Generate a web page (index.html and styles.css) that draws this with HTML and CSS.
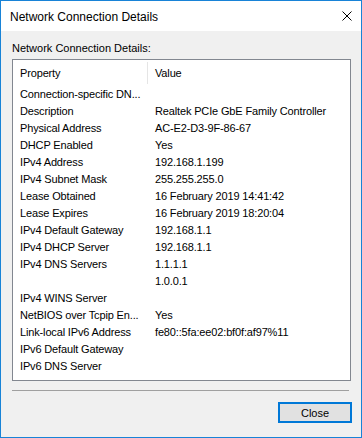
FILE: index.html
```html
<!DOCTYPE html>
<html lang="en">
  <head>
    <meta charset="UTF-8" />
    <meta name="viewport" content="width=device-width, initial-scale=1.0" />
    <title>Network Connection Details</title>
    <link rel="stylesheet" href="styles.css">
  </head>
  <body>
    <div class="window">
      <header class="title-bar">
        <span class="title">Network Connection Details</span>
        <button class="close-x" aria-label="Close">
          <svg width="10" height="10" viewBox="0 0 10 10">
            <path d="M0.5 0.5 L9.5 9.5 M9.5 0.5 L0.5 9.5" stroke="#000" stroke-width="1" fill="none" />
          </svg>
        </button>
      </header>

      <main class="content">
        <p class="caption">Network Connection Details:</p>

        <div class="list-view">
          <div class="list-header">
            <div class="col-prop">Property</div>
            <div class="col-val">Value</div>
          </div>
          <div class="list-body">
            <div class="row"><span>Connection-specific DN...</span><span></span></div>
            <div class="row"><span>Description</span><span>Realtek PCIe GbE Family Controller</span></div>
            <div class="row"><span>Physical Address</span><span>AC-E2-D3-9F-86-67</span></div>
            <div class="row"><span>DHCP Enabled</span><span>Yes</span></div>
            <div class="row"><span>IPv4 Address</span><span>192.168.1.199</span></div>
            <div class="row"><span>IPv4 Subnet Mask</span><span>255.255.255.0</span></div>
            <div class="row"><span>Lease Obtained</span><span>16 February 2019 14:41:42</span></div>
            <div class="row"><span>Lease Expires</span><span>16 February 2019 18:20:04</span></div>
            <div class="row"><span>IPv4 Default Gateway</span><span>192.168.1.1</span></div>
            <div class="row"><span>IPv4 DHCP Server</span><span>192.168.1.1</span></div>
            <div class="row"><span>IPv4 DNS Servers</span><span>1.1.1.1</span></div>
            <div class="row"><span></span><span>1.0.0.1</span></div>
            <div class="row"><span>IPv4 WINS Server</span><span></span></div>
            <div class="row"><span>NetBIOS over Tcpip En...</span><span>Yes</span></div>
            <div class="row"><span>Link-local IPv6 Address</span><span>fe80::5fa:ee02:bf0f:af97%11</span></div>
            <div class="row"><span>IPv6 Default Gateway</span><span></span></div>
            <div class="row"><span>IPv6 DNS Server</span><span></span></div>
          </div>
        </div>

        <hr class="separator" />

        <div class="actions">
          <button class="btn-close">Close</button>
        </div>
      </main>
    </div>
  </body>
</html>
```

FILE: styles.css
```css
/* Windows 10 style details dialog */

* {
  box-sizing: border-box;
}

body {
  margin: 0;
  padding: 0;
  font-family: "Liberation Sans", Arial, sans-serif;
  color: #000;
}

.window {
  width: 362px;
  height: 438px;
  border: 1px solid #1883d7;
  background-color: #f0f0f0;
  display: flex;
  flex-direction: column;
}

.title-bar {
  height: 30px;
  background-color: #fff;
  display: flex;
  align-items: center;
  justify-content: space-between;
  padding: 0 9px 0 9px;
}

.title {
  font-size: 12px;
  margin-top: 1px;
}

.close-x {
  border: none;
  background: none;
  padding: 0;
  width: 10px;
  height: 10px;
  display: flex;
}

.content {
  flex: 1;
  padding: 11px 10px 0 11px;
  font-size: 11px;
}

.caption {
  margin: 0 0 4px 0;
  line-height: 13px;
}

.list-view {
  width: 339px;
  height: 322px;
  border: 1px solid #828790;
  background-color: #fff;
  letter-spacing: -0.15px;
}

.list-header {
  display: flex;
  height: 25px;
  align-items: center;
}

.col-prop {
  width: 135px;
  padding-left: 7px;
  align-self: stretch;
  display: flex;
  align-items: center;
  border-right: 1px solid #e5e5e5;
  margin: 2px 0 1px 0;
}

.col-val {
  padding-left: 7px;
}

.list-body {
  padding-top: 1px;
}

.row {
  display: flex;
  height: 17px;
  line-height: 17px;
  white-space: nowrap;
}

.row span:first-child {
  width: 135px;
  padding-left: 7px;
}

.row span:last-child {
  padding-left: 7px;
}

.separator {
  width: 337px;
  margin: 9px 0 0 0;
  border: none;
  border-top: 1px solid #a0a0a0;
}

.actions {
  display: flex;
  justify-content: flex-end;
  padding: 11px 0 0 0;
  margin-right: -1px;
}

.btn-close {
  width: 74px;
  height: 21px;
  border: 2px solid #0078d7;
  background-color: #e1e1e1;
  font-family: "Liberation Sans", Arial, sans-serif;
  font-size: 11px;
  color: #000;
  padding: 0;
}
```
